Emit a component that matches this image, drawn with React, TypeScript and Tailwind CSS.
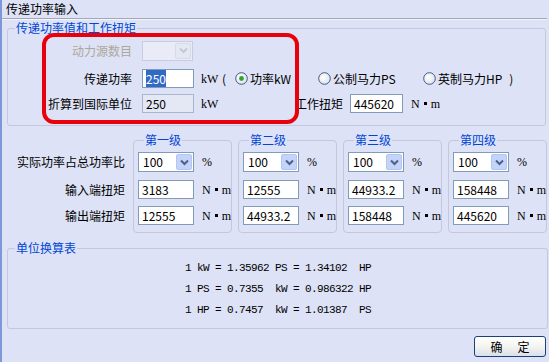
import React from "react";

const Chevron = ({ color }: { color: string }) => (
  <svg width="9" height="7" viewBox="0 0 9 7">
    <path d="M1 1.5 L4.5 5 L8 1.5" fill="none" stroke={color} strokeWidth="2" />
  </svg>
);

function Combo({ value, disabled, className }: { value: string; disabled?: boolean; className: string }) {
  return (
    <div
      className={
        "flex h-[20px] " +
        (disabled ? "border border-[#c6cede] bg-[#e9ecf7] " : "border border-[#7f9db9] bg-white ") +
        className
      }
    >
      <div className="flex-1 pl-[4px] leading-[18px] text-[12px]">{value}</div>
      <div
        className={
          "w-[16px] m-[1px] rounded-[2px] flex items-center justify-center " +
          (disabled ? "bg-[#e4e8f2] border border-[#d6dbe6]" : "bg-[#c4d3f9] border border-[#b3c6f2]")
        }
      >
        <Chevron color={disabled ? "#c3c8d4" : "#4d6185"} />
      </div>
    </div>
  );
}

function Box({ children, className, disabled }: { children: React.ReactNode; className: string; disabled?: boolean }) {
  return (
    <div
      className={
        "h-[19px] border px-[3px] leading-[17px] text-[12px] whitespace-nowrap " +
        (disabled ? "border-[#a9b6cd] bg-[#e4e8f5] " : "border-[#7f9db9] bg-white ") +
        className
      }
    >
      {children}
    </div>
  );
}

function Radio({ checked, label }: { checked?: boolean; label: string }) {
  return (
    <div className="flex items-center">
      <svg width="13" height="13" viewBox="0 0 13 13">
        <defs>
          <radialGradient id="rg" cx="0.4" cy="0.4" r="0.7">
            <stop offset="0" stopColor="#ffffff" />
            <stop offset="1" stopColor="#dcdfe8" />
          </radialGradient>
        </defs>
        <circle cx="6.5" cy="6.5" r="5.8" fill="url(#rg)" stroke="#3d5a8a" strokeWidth="1" />
        {checked && <circle cx="6.5" cy="6.5" r="2.4" fill="#2fa52f" />}
      </svg>
      <span className="ml-[2px]">{label}</span>
    </div>
  );
}

const Unit = ({ children, className = "" }: { children: React.ReactNode; className?: string }) => (
  <span className={"font-['Liberation_Serif',serif] text-[12px] whitespace-pre " + className}>{children}</span>
);

const Nm = ({ className = "" }: { className?: string }) => (
  <span className={"flex items-center font-['Liberation_Serif',serif] text-[12px] " + className}>
    <span>N</span>
    <span className="inline-block w-[3px] h-[3px] bg-black mx-[4px]" />
    <span>m</span>
  </span>
);

const stages = [
  { name: "第一级", inT: "3183", outT: "12555" },
  { name: "第二级", inT: "12555", outT: "44933.2" },
  { name: "第三级", inT: "44933.2", outT: "158448" },
  { name: "第四级", inT: "158448", outT: "445620" },
];

export default function App() {
  return (
    <div className="relative w-[549px] h-[362px] overflow-hidden bg-[#dde2f6] border-l-2 border-[#7d97d9] flex flex-col text-[12px] leading-[14px] text-black font-['Noto_Sans_CJK_SC','Noto_Sans',sans-serif]">
      <div className="h-[18px] pl-[4px] leading-[18px]">传递功率输入</div>
      <div className="h-px bg-[#a4a8b6] mr-[2px]" />
      <div className="h-px bg-[#f2f4fb] mr-[2px]" />

      <fieldset className="mt-[1px] ml-[5px] mr-[3px] border border-[#c3c8da] rounded-[3px] pb-[12px]">
        <legend className="ml-[7px] px-[1px] text-[#0046d5] leading-[14px]">传递功率值和工作扭矩</legend>
        <div className="flex items-center h-[19px] mt-[6px]">
          <div className="w-[124px] text-right text-[#aca899]">动力源数目</div>
          <Combo value="" disabled className="ml-[10px] w-[51px]" />
        </div>
        <div className="flex items-center h-[19px] mt-[9px]">
          <div className="w-[124px] text-right">传递功率</div>
          <Box className="ml-[10px] w-[52px]">
            <span className="bg-[#316ac5] text-white">250</span>
          </Box>
          <Unit className="w-[28px] pl-[7px]">kW</Unit>
          <span className="w-[13px]">(</span>
          <div className="w-[83px]">
            <Radio checked label="功率kW" />
          </div>
          <div className="w-[105px]">
            <Radio label="公制马力PS" />
          </div>
          <Radio label="英制马力HP" />
          <span className="ml-[7px]">)</span>
        </div>
        <div className="flex items-center h-[19px] mt-[6px]">
          <div className="w-[124px] text-right">折算到国际单位</div>
          <Box disabled className="ml-[10px] w-[52px]">
            250
          </Box>
          <Unit className="w-[28px] pl-[7px]">kW</Unit>
          <span className="w-[73px]" />
          <span className="w-[48px]">工作扭矩</span>
          <Box className="ml-[7px] w-[53px]">445620</Box>
          <Nm className="ml-[8px]" />
        </div>
      </fieldset>

      <div className="flex mt-[7px]">
        <div className="w-[131px] pr-[8px] pt-[19px] flex flex-col items-end">
          <div className="h-[20px] leading-[20px]">实际功率占总功率比</div>
          <div className="h-[19px] leading-[19px] mt-[8px]">输入端扭矩</div>
          <div className="h-[19px] leading-[19px] mt-[7px]">输出端扭矩</div>
        </div>
        <div className="flex gap-[6px]">
          {stages.map((s) => (
            <fieldset key={s.name} className="w-[99px] border border-[#c3c8da] rounded-[4px] pl-[4px] pt-[5px] pb-[7px]">
              <legend className="ml-[6px] px-[1px] text-[#0046d5] leading-[14px]">{s.name}</legend>
              <div className="flex items-center h-[20px]">
                <Combo value="100" className="w-[56px]" />
                <Unit className="ml-[8px]">%</Unit>
              </div>
              <div className="flex items-center h-[19px] mt-[8px]">
                <Box className="w-[56px]">{s.inT}</Box>
                <Nm className="ml-[8px]" />
              </div>
              <div className="flex items-center h-[19px] mt-[7px]">
                <Box className="w-[56px]">{s.outT}</Box>
                <Nm className="ml-[8px]" />
              </div>
            </fieldset>
          ))}
        </div>
      </div>

      <fieldset className="mt-[8px] ml-[5px] mr-[1px] border border-[#c3c8da] rounded-[3px] pb-[7px]">
        <legend className="ml-[7px] px-[1px] text-[#0046d5] leading-[14px]">单位换算表</legend>
        <div className="pl-[177px] pt-[3px] font-['Liberation_Mono',monospace] text-[11px] tracking-[-0.6px] leading-[21px] whitespace-pre">
          <div>1 kW = 1.35962 PS = 1.34102  HP</div>
          <div>1 PS = 0.7355  kW = 0.986322 HP</div>
          <div>1 HP = 0.7457  kW = 1.01387  PS</div>
        </div>
      </fieldset>

      <div className="flex justify-end pr-[3px] mt-[7px]">
        <button className="w-[72px] h-[21px] rounded-[3px] border border-[#1f3f78] bg-gradient-to-b from-white via-[#f4f4f0] to-[#d9dfec] flex items-center justify-center gap-[15px] leading-[14px]">
          <span>确</span>
          <span>定</span>
        </button>
      </div>

      <div className="absolute left-[40px] top-[33px] w-[257px] h-[91px] border-[4px] border-[#e8000b] rounded-[12px] pointer-events-none" />
    </div>
  );
}
